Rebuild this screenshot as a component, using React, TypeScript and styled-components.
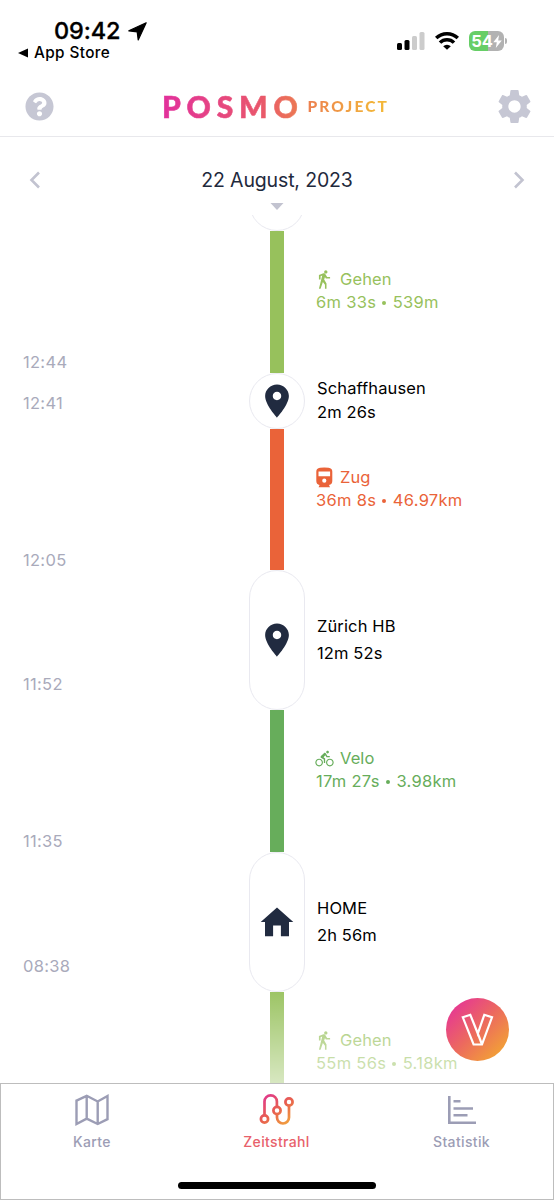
import React from "react";
import styled, { createGlobalStyle } from "styled-components";
import { IoMdWalk, IoMdBicycle, IoMdPin } from "react-icons/io";
import { MdSettings } from "react-icons/md";
import { FaQuestionCircle } from "react-icons/fa";

const Global = createGlobalStyle`
  * { box-sizing: border-box; }
  html, body { margin: 0; padding: 0; background: #fff; }
  body { font-family: Inter, "Liberation Sans", sans-serif; color: #000; }
  svg { display: block; }
`;

const Screen = styled.div`
  width: 554px;
  height: 1200px;
  display: flex;
  flex-direction: column;
  overflow: hidden;
  background: #fff;
`;

const StatusBar = styled.div`
  height: 76px;
  display: flex;
  justify-content: space-between;
  padding: 18px 47px 0 18px;
`;

const StatusLeft = styled.div`
  display: flex;
  flex-direction: column;
`;

const Clock = styled.div`
  display: flex;
  align-items: center;
  gap: 7px;
  height: 26px;
  padding-left: 36px;
  font-size: 23.5px;
  line-height: 26px;
  font-weight: 500;
  letter-spacing: -0.1px;
  -webkit-text-stroke: 0.3px #000;
`;

const BackLink = styled.div`
  display: flex;
  align-items: center;
  gap: 6px;
  height: 17px;
  font-size: 15.3px;
  line-height: 17px;
  font-weight: 500;
  letter-spacing: 0.4px;
`;

const StatusRight = styled.div`
  display: flex;
  align-items: flex-start;
  padding-top: 13px;
  height: 34px;
`;

const Battery = styled.div`
  display: flex;
  align-items: center;
  justify-content: center;
  width: 35px;
  height: 20px;
  margin-left: 10px;
  border-radius: 6px;
  background: linear-gradient(90deg, #67ce67 54%, #b2b2b2 54%);
  color: #fff;
  font-size: 16.5px;
  font-weight: 700;
  line-height: 20px;
  letter-spacing: -0.2px;
`;

const BatteryCap = styled.div`
  width: 2px;
  height: 6px;
  margin: 7px 0 0 1px;
  border-radius: 0 2px 2px 0;
  background: #b2b2b2;
`;

const Header = styled.header`
  height: 61px;
  display: flex;
  align-items: center;
  justify-content: space-between;
  padding: 0 19px 0 25px;
  border-bottom: 1px solid #e8e8ec;
  color: #c6c7d4;
`;

const Logo = styled.div`
  display: flex;
  align-items: center;
  width: 232px;
  margin-left: 8px;
  font-family: Lato, sans-serif;
  font-weight: 900;
  color: transparent;
  background: linear-gradient(90deg, #e2309c 0%, #e9566c 42%, #ec7b51 60%, #f2b13b 90%, #f4bb35 100%);
  background-clip: text;
  -webkit-background-clip: text;
`;

const LogoName = styled.span`
  font-size: 30px;
  line-height: 34px;
  letter-spacing: 5.8px;
  -webkit-text-stroke: 0.6px transparent;
`;

const LogoSuffix = styled.span`
  font-size: 15.5px;
  line-height: 34px;
  letter-spacing: 2.1px;
  margin-left: 4px;
`;

const DateBar = styled.div`
  height: 78px;
  flex: none;
  display: flex;
  justify-content: space-between;
  padding: 34px 29px 0;
`;

const DatePicker = styled.div`
  display: flex;
  flex-direction: column;
  align-items: center;
  gap: 11px;
  margin-top: -3px;
  color: #1f2a3d;
  font-size: 19.5px;
  line-height: 24px;
  letter-spacing: -0.15px;
`;

const Timeline = styled.main`
  position: relative;
  flex: 1;
  min-height: 0;
  overflow: hidden;
`;

const Track = styled.div`
  display: flex;
  flex-direction: column;
  margin-top: -40px;
`;

const Row = styled.div<{ $h: number }>`
  display: grid;
  grid-template-columns: 249px 56px 1fr;
  height: ${(p) => p.$h}px;
`;

const Time = styled.div<{ $bottom: number }>`
  align-self: end;
  padding: 0 0 ${(p) => p.$bottom}px 23px;
  font-size: 16.5px;
  line-height: 20px;
  letter-spacing: 0.3px;
  color: #a9aabb;
`;

const Bar = styled.div<{ $fill: string }>`
  justify-self: center;
  width: 14px;
  height: 100%;
  background: ${(p) => p.$fill};
`;

const Node = styled.div`
  display: flex;
  align-items: center;
  justify-content: center;
  height: 100%;
  border: 1.5px solid #e9e9f0;
  border-radius: 28px;
  color: #212b40;
`;

const TripText = styled.div<{ $color: string }>`
  padding: 37px 0 0 11px;
  font-size: 16.5px;
  line-height: 23px;
  letter-spacing: 0.3px;
  color: ${(p) => p.$color};
`;

const TripMode = styled.div`
  display: flex;
  align-items: center;
  gap: 5px;
  height: 23px;
  letter-spacing: 0.1px;
  svg { margin-left: -2px; }
`;

const Dot = styled.span`
  display: inline-block;
  width: 4px;
  height: 4px;
  margin: 0 6.5px 3px 6px;
  border-radius: 50%;
  background: currentColor;
`;

const StopText = styled.div<{ $line: number }>`
  align-self: center;
  padding: 0 0 ${(p) => (p.$line < 27 ? 2 : 0)}px 12px;
  font-size: 16.5px;
  line-height: ${(p) => p.$line}px;
  letter-spacing: 0.12px;
`;

const Fade = styled.div`
  position: absolute;
  left: 0;
  right: 0;
  bottom: 0;
  height: 100px;
  background: linear-gradient(rgba(255, 255, 255, 0), rgba(255, 255, 255, 0.62));
`;

const Fab = styled.button`
  position: absolute;
  right: 45px;
  bottom: 22px;
  width: 63px;
  height: 63px;
  padding: 0;
  border: 0;
  border-radius: 50%;
  background: linear-gradient(135deg, #e63992 12%, #ec6a5e 50%, #f2a136 88%);
`;

const TabBar = styled.nav`
  height: 117px;
  flex: none;
  display: flex;
  flex-direction: column;
  align-items: center;
  justify-content: space-between;
  border: 1px solid #bdbdbd;
  padding-bottom: 10px;
  background: #fff;
`;

const Tabs = styled.div`
  display: grid;
  grid-template-columns: 182px 187px 1fr;
  width: 100%;
`;

const Tab = styled.div<{ $active?: boolean }>`
  display: flex;
  flex-direction: column;
  align-items: center;
  gap: 5px;
  padding-top: 8px;
  font-size: 14px;
  line-height: 18px;
  font-weight: 500;
  letter-spacing: 0.35px;
  color: ${(p) => (p.$active ? "#e8616b" : "#9c9db5")};
`;

const HomeIndicator = styled.div`
  width: 198px;
  height: 7px;
  border-radius: 4px;
  background: #000;
`;

const Chevron = ({ d }: { d: string }) => (
  <svg width="12" height="18" viewBox="0 0 12 18" fill="none" stroke="#c2c3d0" strokeWidth="2.6">
    <path d={d} />
  </svg>
);

const TrainIcon = () => (
  <svg width="21" height="21" viewBox="0 0 21 21" fill="currentColor">
    <path
      fillRule="evenodd"
      d="M6 .8Q10.300 .1 14.600 .8Q18.300 1.400 18.300 4.600V14Q18.300 17.600 15 17.900H5.600Q2.300 17.600 2.300 14V4.600Q2.300 1.400 6 .8ZM4.500 4.600V9.300H16.100V4.600ZM10.300 11.600A2.100 2.100 0 1 0 10.300 15.800A2.100 2.100 0 1 0 10.300 11.600Z"
    />
    <path d="M5.800 17.500H14.800L16 20.200H4.600Z" />
  </svg>
);

const HouseIcon = () => (
  <svg width="34" height="30" viewBox="0 0 34 30" fill="currentColor">
    <path d="M17 .5 33.300 15H29V29.300H20.900V18.500H13.100V29.300H5V15H.7Z" />
  </svg>
);

type Trip = {
  kind: "trip";
  mode: string;
  duration: string;
  distance: string;
  icon: React.ReactNode;
  color: string;
  time: string;
  pad: number;
  h: number;
};
type Stop = { kind: "stop"; name: string; info: string; icon: React.ReactNode; time: string; h: number; line: number };

const items: (Trip | Stop)[] = [
  { kind: "stop", name: "", info: "", icon: null, time: "", h: 56, line: 24 },
  { kind: "trip", mode: "Gehen", duration: "6m 33s", distance: "539m", icon: <IoMdWalk size={21} />, color: "#97c15c", time: "12:44", pad: 1, h: 142 },
  { kind: "stop", name: "Schaffhausen", info: "2m 26s", icon: <IoMdPin size={38} />, time: "12:41", h: 56, line: 24 },
  { kind: "trip", mode: "Zug", duration: "36m 8s", distance: "46.97km", icon: <TrainIcon />, color: "#ea6339", time: "12:05", pad: 0, h: 141 },
  { kind: "stop", name: "Zürich HB", info: "12m 52s", icon: <IoMdPin size={38} />, time: "11:52", h: 140, line: 27 },
  { kind: "trip", mode: "Velo", duration: "17m 27s", distance: "3.98km", icon: <IoMdBicycle size={21} />, color: "#67ad5b", time: "11:35", pad: 1, h: 142 },
  { kind: "stop", name: "HOME", info: "2h 56m", icon: <HouseIcon />, time: "08:38", h: 140, line: 27 },
  { kind: "trip", mode: "Gehen", duration: "55m 56s", distance: "5.18km", icon: <IoMdWalk size={21} />, color: "#97c15c", time: "", pad: 0, h: 141 },
];

export default function App() {
  return (
    <>
      <Global />
      <Screen>
        <StatusBar>
          <StatusLeft>
            <Clock>
              09:42
              <svg width="19" height="19" viewBox="0 0 19 19">
                <path d="M18.2 0.8 10.2 18 9.2 9.9 0.8 8.8Z" stroke="#000" strokeWidth="1.2" strokeLinejoin="round" />
              </svg>
            </Clock>
            <BackLink>
              <svg width="10" height="10" viewBox="0 0 10 10">
                <path d="M0 5 10 0.5V9.5Z" />
              </svg>
              App Store
            </BackLink>
          </StatusLeft>
          <StatusRight>
            <svg width="28" height="20" viewBox="0 0 28 20">
              <rect x="0" y="12" width="5" height="7" rx="1.5" />
              <rect x="7.5" y="9" width="5" height="10" rx="1.5" />
              <rect x="15" y="5" width="5" height="14" rx="1.5" fill="#ccc" />
              <rect x="22.5" y="1" width="5" height="18" rx="1.5" fill="#ccc" />
            </svg>
            <svg width="24" height="20" viewBox="0 0 24 20" style={{ marginLeft: 10 }} fill="none" stroke="#000">
              <path d="M1.2 7a15.6 15.6 0 0 1 21.6 0" strokeWidth="3.5" />
              <path d="M5 11.600a9.8 9.800 0 0 1 14 0" strokeWidth="3.500" />
              <path d="M12 18.800 8.200 15.200a5.400 5.400 0 0 1 7.600 0Z" fill="#000" stroke="none" />
            </svg>
            <Battery>
              54
              <svg width="9" height="13" viewBox="0 0 9 13">
                <path d="M6 0 0.3 7.3H3.8L2.8 13 8.8 5.4H5.2Z" fill="#fff" />
              </svg>
            </Battery>
            <BatteryCap />
          </StatusRight>
        </StatusBar>

        <Header>
          <FaQuestionCircle size={29} />
          <Logo>
            <LogoName>POSMO</LogoName>
            <LogoSuffix>PROJECT</LogoSuffix>
          </Logo>
          <MdSettings size={41} />
        </Header>

        <DateBar>
          <Chevron d="M10 1.5 2.5 9 10 16.5" />
          <DatePicker>
            22 August, 2023
            <svg width="14" height="7" viewBox="0 0 14 7">
              <path d="M0.5 0H13.5L7 7Z" fill="#c2c3d0" />
            </svg>
          </DatePicker>
          <Chevron d="M2 1.5 9.5 9 2 16.5" />
        </DateBar>

        <Timeline>
          <Track>
            {items.map((item, i) =>
              item.kind === "trip" ? (
                <Row key={i} $h={item.h}>
                  <Time $bottom={item.pad}>{item.time}</Time>
                  <Bar $fill={item.color} />
                  <TripText $color={item.color}>
                    <TripMode>
                      {item.icon}
                      {item.mode}
                    </TripMode>
                    {item.duration}
                    <Dot />
                    {item.distance}
                  </TripText>
                </Row>
              ) : (
                <Row key={i} $h={item.h}>
                  <Time $bottom={16}>{item.time}</Time>
                  <Node>{item.icon}</Node>
                  <StopText $line={item.line}>
                    <div>{item.name}</div>
                    <div>{item.info}</div>
                  </StopText>
                </Row>
              )
            )}
          </Track>
          <Fade />
          <Fab aria-label="Community">
            <svg width="63" height="63" viewBox="0 0 63 63" fill="none" stroke="#fff" strokeWidth="2.2">
              <path d="M16.8 19.300 24.300 16.800 31.800 35.500 38.300 16.800 46 19.300 36 46.500H27.600Z" />
              <path d="M31.800 35.500 36 46.500" />
            </svg>
          </Fab>
        </Timeline>

        <TabBar>
          <Tabs>
            <Tab>
              <svg width="36" height="36" viewBox="0 0 36 36" fill="none" stroke="#9c9db5" strokeWidth="2.4">
                <path d="M2.500 8.600 12.700 3.800 23.700 9.500 33.500 4V27.200L23.700 32 12.700 26.600 2.500 32ZM12.700 3.800V26.600M23.700 9.500V32" />
              </svg>
              Karte
            </Tab>
            <Tab $active>
              <svg width="36" height="36" viewBox="0 0 36 36" fill="none" stroke="url(#route)" strokeWidth="2.7">
                <defs>
                  <linearGradient id="route" x1="6" y1="2" x2="30" y2="34" gradientUnits="userSpaceOnUse">
                    <stop offset="0" stopColor="#e0378f" />
                    <stop offset="0.5" stopColor="#e8604f" />
                    <stop offset="1" stopColor="#f2a93b" />
                  </linearGradient>
                </defs>
                <circle cx="5.5" cy="27" r="3.6" />
                <circle cx="18" cy="18.500" r="3.6" />
                <circle cx="30" cy="10" r="3.6" />
                <path d="M5.5 23.500V9.500a6.2 6.2 0 0 1 12.4 0V15M18 22V25.500a6 6 0 0 0 12 0V13.500" />
              </svg>
              Zeitstrahl
            </Tab>
            <Tab>
              <svg width="36" height="36" viewBox="0 0 36 36" fill="none" stroke="#9c9db5" strokeWidth="2.6">
                <path d="M5.3 4V30.700H32M9.5 9.3H16.5M9.5 16.5H29M9.5 23.3H23.5" />
              </svg>
              Statistik
            </Tab>
          </Tabs>
          <HomeIndicator />
        </TabBar>
      </Screen>
    </>
  );
}
